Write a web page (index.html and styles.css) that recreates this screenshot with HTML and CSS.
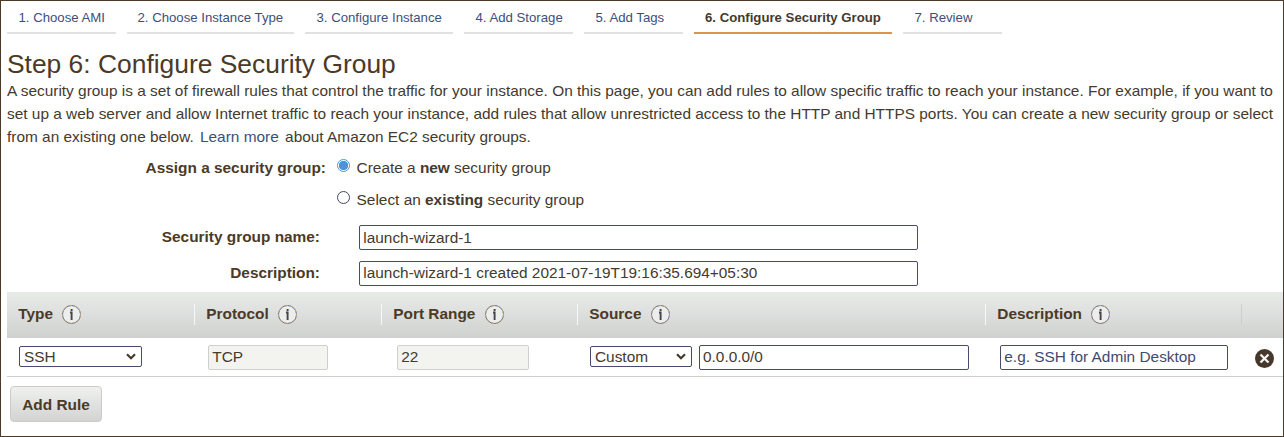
FILE: index.html
```html
<!DOCTYPE html>
<html lang="en">
<head>
<meta charset="utf-8">
<title>Step 6: Configure Security Group</title>
<link rel="stylesheet" href="styles.css">
</head>
<body>
<svg class="defs" width="0" height="0">
  <symbol id="info" viewBox="0 0 19 19">
    <circle cx="9.5" cy="9.5" r="9" fill="#eceeec" stroke="#5b7397" stroke-width="1"/>
    <circle cx="9.5" cy="9.5" r="9" fill="none" stroke="#e0a05c" stroke-width="1" stroke-dasharray="2.5 2.5"/>
    <path d="M9.6 4v2M8 7.5h1.6V15" fill="none" stroke="#48424a" stroke-width="1.9"/>
  </symbol>
  <symbol id="chevron" viewBox="0 0 10 7">
    <path d="M1 1.2l4 4 4-4" fill="none" stroke="#453a2c" stroke-width="2.2"/>
  </symbol>
</svg>
<div class="page">
  <nav class="tabs">
    <a class="tab tab-ami">1. Choose AMI</a>
    <a class="tab tab-type">2. Choose Instance Type</a>
    <a class="tab tab-instance">3. Configure Instance</a>
    <a class="tab tab-storage">4. Add Storage</a>
    <a class="tab tab-tags">5. Add Tags</a>
    <a class="tab tab-group active">6. Configure Security Group</a>
    <a class="tab tab-review">7. Review</a>
  </nav>
  <h1 class="title">Step 6: Configure Security Group</h1>
  <p class="intro">A security group is a set of firewall rules that control the traffic for your instance. On this page, you can add rules to allow specific traffic to reach your instance. For example, if you want to<br>set up a web server and allow Internet traffic to reach your instance, add rules that allow unrestricted access to the HTTP and HTTPS ports. You can create a new security group or select<br>from an existing one below. <a class="link">Learn more</a> about Amazon EC2 security groups.</p>
  <div class="form">
    <div class="row row-assign">
      <span class="label">Assign a security group:</span>
      <label class="choice"><input class="radio" type="radio" name="sg" checked><span>Create a <b>new</b> security group</span></label>
    </div>
    <div class="row row-existing">
      <span class="label"></span>
      <label class="choice"><input class="radio" type="radio" name="sg"><span>Select an <b>existing</b> security group</span></label>
    </div>
    <div class="row row-field">
      <span class="label">Security group name:</span>
      <input class="field field-name" type="text" value="launch-wizard-1">
    </div>
    <div class="row row-field">
      <span class="label">Description:</span>
      <input class="field" type="text" value="launch-wizard-1 created 2021-07-19T19:16:35.694+05:30">
    </div>
  </div>
  <div class="rules">
    <div class="cols head">
      <div class="th">Type<svg class="info"><use href="#info"/></svg></div>
      <div class="th">Protocol<svg class="info"><use href="#info"/></svg></div>
      <div class="th">Port Range<svg class="info"><use href="#info"/></svg></div>
      <div class="th">Source<svg class="info"><use href="#info"/></svg></div>
      <div class="th">Description<svg class="info"><use href="#info"/></svg></div>
      <div class="th th-last"></div>
    </div>
    <div class="cols body">
      <div class="td td-type"><div class="select">SSH<svg class="chevron"><use href="#chevron"/></svg></div></div>
      <div class="td td-protocol"><input class="field" type="text" value="TCP" disabled></div>
      <div class="td td-port"><input class="field" type="text" value="22" disabled></div>
      <div class="td td-source"><div class="select">Custom<svg class="chevron"><use href="#chevron"/></svg></div><input class="field" type="text" value="0.0.0.0/0"></div>
      <div class="td td-desc"><input class="field" type="text" placeholder="e.g. SSH for Admin Desktop"></div>
      <div class="td td-remove"><svg class="remove" viewBox="0 0 19 19"><circle cx="9.5" cy="9.5" r="9.5" fill="#46392c"/><path d="M5.5 5.5l8 8M13.5 5.5l-8 8" stroke="#f4f4f4" stroke-width="2.3"/></svg></div>
    </div>
  </div>
  <button class="add">Add Rule</button>
</div>
</body>
</html>
```

FILE: styles.css
```css
* { box-sizing: border-box; }
body {
  margin: 0;
  background: #fff;
  color: #443a2e;
  font: 15.4px/23px "Liberation Sans", Arial, sans-serif;
}
.defs { display: block; }
.page {
  width: 1284px;
  height: 437px;
  border: 1px solid #4b3a27;
  padding-left: 6px;
  overflow: hidden;
}
.tabs { display: flex; gap: 11px; height: 33px; }
.tab {
  border-bottom: 2px solid #e1e1e1;
  color: #3c4f7c;
  font-size: 13.2px;
  line-height: 33px;
  padding-left: 11.5px;
  white-space: nowrap;
}
.tab-ami { width: 109px; }
.tab-type { width: 167px; padding-left: 10.5px; }
.tab-instance { width: 148px; }
.tab-storage { width: 109px; }
.tab-tags { width: 99px; }
.tab-group { width: 198px; }
.tab-review { width: 99px; }
.tab.active { border-color: #dc944d; color: #443a2e; font-weight: bold; padding-left: 11px; }
.title { margin: 15px 0 0; font-size: 26.4px; line-height: 30px; font-weight: normal; color: #4b3a27; white-space: nowrap; }
.intro { margin: 0; white-space: nowrap; font-size: 15.42px; }
.link { color: #3c4f7c; margin: 0 2px; }
.row { display: flex; }
.label { width: 313px; text-align: right; font-weight: bold; color: #4b3a27; }
.row-assign { padding-top: 8px; height: 40px; }
.row-assign .label, .row-existing .label { width: 319px; }
.row-existing { height: 37px; }
.choice { display: flex; margin-left: 11px; }
.radio {
  appearance: none;
  width: 13px;
  height: 13px;
  margin: 3px 6.6px 0 0;
  border: 1px solid #45456b;
  border-radius: 50%;
  background: #fff;
}
.radio:checked { border-color: #4b93dd; background: radial-gradient(circle, #4b93dd 4.3px, #fff 5px); }
.row-field { height: 36px; }
.field {
  height: 25px;
  border: 1px solid #484a70;
  border-radius: 2px;
  background: #fff;
  padding: 0 3.3px 1px;
  color: #443a2e;
  font: 15.4px "Liberation Sans", Arial, sans-serif;
}
.field-name { padding-top: 1px; padding-bottom: 0; }
.field::placeholder { color: #3f4b6e; }
.field:disabled { border-color: #cfcfcc; background: #f3f3f0; }
.row-field .field { width: 559px; margin-left: 39px; }
.cols { display: grid; grid-template-columns: 188px 187px 196px 408px 256px 1fr; }
.head { height: 46px; margin-top: -5px; background: linear-gradient(#e8eae8, #dee0df 45%, #cfd1ce); }
.th {
  display: flex;
  align-items: center;
  height: 21px;
  margin-top: 12px;
  padding: 0 0 2px 11.3px;
  font-weight: bold;
  color: #4b3a27;
  border-right: 1px solid #f8f8f8;
}
.th:nth-child(5) { border-color: #cdcfcd; }
.th-last { border: 0; }
.info { width: 19px; height: 19px; margin: 2px 0 0 9.3px; }
.body { height: 39px; border-bottom: 1px solid #cfcfcf; }
.td { display: flex; padding-top: 7px; }
.select {
  display: flex;
  align-items: center;
  justify-content: space-between;
  height: 21px;
  margin-top: 1px;
  padding: 0 5px 0 4px;
  border: 1px solid #484a70;
  border-radius: 2px;
  background: #fff;
}
.chevron { width: 10px; height: 7px; }
.td-type { padding-left: 12px; }
.td-type .select { width: 123px; }
.td-protocol { padding-left: 13px; }
.td-protocol .field { width: 120px; }
.td-port { padding-left: 15px; }
.td-port .field { width: 132px; }
.td-source { padding-left: 12px; gap: 7px; }
.td-source .select { width: 102px; }
.td-source .field { width: 270px; padding-left: 3px; }
.td-desc { padding-left: 14px; }
.td-desc .field { width: 228px; }
.td-remove { padding: 11px 0 0 13px; }
.remove { width: 19px; height: 19px; }
.add {
  display: block;
  width: 92px;
  height: 36px;
  margin: 9px 0 0 3px;
  padding: 1px 0 0;
  border: 1px solid #cbcbca;
  border-radius: 4px;
  background: linear-gradient(#f1f2ef, #e1e3e2 45%, #d3d4d2);
  color: #4b3a27;
  font: bold 15.4px "Liberation Sans", Arial, sans-serif;
}
```
